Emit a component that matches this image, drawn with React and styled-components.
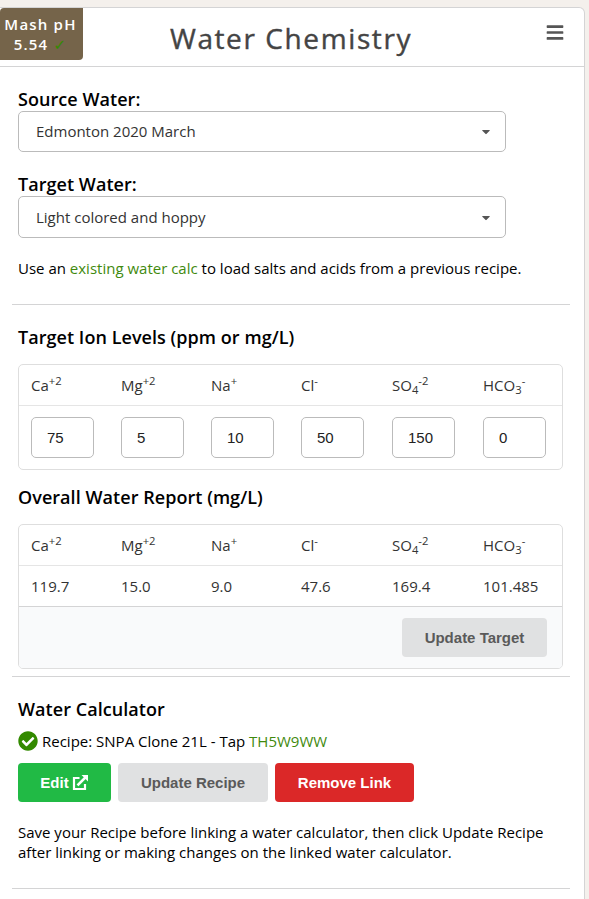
import React, { useState } from "react";
import styled, { createGlobalStyle } from "styled-components";
import { FaBars, FaCaretDown, FaCheckCircle } from "react-icons/fa";

const targetIons = [
  { name: "Ca", sup: "+2", target: "75", overall: "119.7" },
  { name: "Mg", sup: "+2", target: "5", overall: "15.0" },
  { name: "Na", sup: "+", target: "10", overall: "9.0" },
  { name: "Cl", sup: "-", target: "50", overall: "47.6" },
  { name: "SO", sub: "4", sup: "-2", target: "150", overall: "169.4" },
  { name: "HCO", sub: "3", sup: "-", target: "0", overall: "101.485" },
];

const IonHeader = () => (
  <Row $height={40}>
    {targetIons.map((ion) => (
      <Ion key={ion.name}>
        {ion.name}
        {ion.sub && <sub>{ion.sub}</sub>}
        <sup>{ion.sup}</sup>
      </Ion>
    ))}
  </Row>
);

const App = () => {
  // States
  const [levels, setLevels] = useState(targetIons.map((ion) => ion.target));

  // This is to Handle Changes in the target inputs
  const handleChange = (event, index) => {
    setLevels(levels.map((l, i) => (i === index ? event.target.value : l)));
  };

  return (
    <>
      <GlobalStyle />
      <Panel>
        <Header>
          <PhBadge>
            <span>Mash pH</span>
            <span>
              5.54 <Tick>✓</Tick>
            </span>
          </PhBadge>
          <Title>Water Chemistry</Title>
          <MenuIcon />
        </Header>
        <Section $pad="21px 0 26px">
          <Label>Source Water:</Label>
          <Select $height={41} $bottom={1}>
            <span>Edmonton 2020 March</span>
            <FaCaretDown />
          </Select>
          <Label $top={21}>Target Water:</Label>
          <Select $height={42}>
            <span>Light colored and hoppy</span>
            <FaCaretDown />
          </Select>
          <Text $top={20}>
            Use an <Link href="#">existing water calc</Link> to load salts and
            acids from a previous recipe.
          </Text>
        </Section>
        <Divider />
        <Section $pad="21px 0 7px">
          <Label>Target Ion Levels (ppm or mg/L)</Label>
          <Table $top={15}>
            <IonHeader />
            <Row $height={63} $line="#e5e5e5">
              {targetIons.map((ion, i) => (
                <div key={ion.name}>
                  <Input
                    type="text"
                    value={levels[i]}
                    onChange={(e) => handleChange(e, i)}
                  />
                </div>
              ))}
            </Row>
          </Table>
          <Label $top={16}>Overall Water Report (mg/L)</Label>
          <Table $top={15}>
            <IonHeader />
            <Row $height={40} $line="#e5e5e5">
              {targetIons.map((ion) => (
                <Ion key={ion.name}>{ion.overall}</Ion>
              ))}
            </Row>
            <TableFooter>
              <Button $width={145}>Update Target</Button>
            </TableFooter>
          </Table>
        </Section>
        <Divider />
        <Section $pad="21px 0 26px">
          <Label>Water Calculator</Label>
          <Recipe>
            <FaCheckCircle />
            <span>
              Recipe: SNPA Clone 21L - Tap <Link href="#">TH5W9WW</Link>
            </span>
          </Recipe>
          <Buttons>
            <Button $width={93} $bg="#21ba45" $color="white">
              Edit
              <svg width="17" height="17" viewBox="0 0 17 17" fill="none">
                <path
                  d="M7.5 4H2v11h11V10"
                  stroke="currentColor"
                  strokeWidth="2.2"
                />
                <path
                  d="M5.5 11.3L13.5 3.3"
                  stroke="currentColor"
                  strokeWidth="2.6"
                />
                <path d="M9.5 1H16v6.5z" fill="currentColor" />
              </svg>
            </Button>
            <Button $width={150}>Update Recipe</Button>
            <Button $width={139} $bg="#db2828" $color="white">
              Remove Link
            </Button>
          </Buttons>
          <Text $top={20}>
            Save your Recipe before linking a water calculator, then click
            Update Recipe
            <br />
            after linking or making changes on the linked water calculator.
          </Text>
        </Section>
        <Divider />
      </Panel>
    </>
  );
};

const GlobalStyle = createGlobalStyle`
  * {
    box-sizing: border-box;
  }
  body {
    margin: 0;
    overflow: hidden;
    background-color: #f4f0ec;
    font-family: "Open Sans", "Noto Sans", sans-serif;
    font-size: 15px;
    color: #000;
  }
`;

const Panel = styled.div`
  width: 585px;
  height: 900px;
  margin-top: 7px;
  background-color: white;
  border: 1px solid #d4d4d5;
  border-left: none;
  border-radius: 0 6px 0 0;
`;

const Header = styled.div`
  display: grid;
  grid-template-columns: 83px 1fr 85px;
  height: 59px;
  border-bottom: 1px solid #d4d4d5;
`;

const PhBadge = styled.div`
  display: flex;
  flex-direction: column;
  align-items: center;
  height: 52px;
  padding: 6px 2px 0 0;
  background-color: #75644a;
  border-radius: 4px 0 4px 0;
  color: white;
  font-size: 15px;
  font-weight: 600;
  line-height: 20px;
  letter-spacing: 1.2px;
  white-space: nowrap;
`;

const Tick = styled.span`
  color: #338a00;
  font-family: "DejaVu Sans", sans-serif;
  font-size: 15px;
  font-weight: 400;
  line-height: 0;
`;

const Title = styled.h1`
  margin: 0;
  padding-top: 10px;
  color: #444;
  font-size: 28px;
  font-weight: 400;
  line-height: 40px;
  letter-spacing: 1.6px;
  text-align: center;
  -webkit-text-stroke: 0.4px #444;
`;

const MenuIcon = styled(FaBars)`
  margin: 15px 20px 0 auto;
  width: 18px;
  height: 19px;
  color: #555;
`;

const Section = styled.div`
  padding: ${(props) => props.$pad};
  margin: 0 21px 0 18px;
`;

const Label = styled.h3`
  margin: ${(props) => props.$top || 0}px 0 0;
  padding-bottom: 1px;
  font-size: 18px;
  font-weight: 600;
  line-height: 22px;
  letter-spacing: 0.05px;
`;

const Select = styled.div`
  display: flex;
  justify-content: space-between;
  align-items: center;
  width: 488px;
  height: ${(props) => props.$height}px;
  padding: 0 13px ${(props) => props.$bottom || 0}px 17px;
  border: 1px solid #bbb;
  border-radius: 5px;
  color: #333;
  line-height: 20px;
  svg {
    width: 12px;
    height: 13px;
    color: #555;
  }
`;

const Text = styled.p`
  margin: ${(props) => props.$top}px 0 0;
  line-height: 20px;
  white-space: nowrap;
`;

const Link = styled.a`
  color: #3f8a0e;
  text-decoration: none;
`;

const Divider = styled.div`
  height: 1px;
  margin: 0 14px 0 12px;
  background-color: #d4d4d5;
`;

const Table = styled.div`
  width: 545px;
  margin-top: ${(props) => props.$top}px;
  border: 1px solid #dedede;
  border-radius: 5px;
  overflow: hidden;
`;

const Row = styled.div`
  display: grid;
  grid-template-columns: 90px 90px 90px 91px 91px 79px;
  align-items: center;
  box-sizing: content-box;
  height: ${(props) => props.$height}px;
  padding-left: 12px;
  border-top: ${(props) => (props.$line ? `1px solid ${props.$line}` : "none")};
`;

const Ion = styled.div`
  color: #333;
  line-height: 20px;
  sup,
  sub {
    position: relative;
    font-size: 11.25px;
    line-height: 0;
    vertical-align: baseline;
  }
  sup {
    top: -5.6px;
  }
  sub {
    top: 3px;
  }
`;

const Input = styled.input`
  display: block;
  width: 63px;
  height: 41px;
  padding: 0 15px;
  border: 1px solid #bbb;
  border-radius: 5px;
  outline: none;
  color: #222;
  font-family: "Liberation Sans", Arial, sans-serif;
  font-size: 15px;
`;

const TableFooter = styled.div`
  display: flex;
  justify-content: flex-end;
  height: 62px;
  padding: 11px 15px 0 0;
  background-color: #f9fafb;
  border-top: 1px solid #d4d4d5;
`;

const Recipe = styled.div`
  display: flex;
  align-items: center;
  gap: 4px;
  height: 22px;
  margin-top: 9px;
  svg {
    width: 20px;
    height: 20px;
    color: #338a00;
  }
`;

const Buttons = styled.div`
  display: flex;
  gap: 7px;
  margin-top: 11px;
`;

const Button = styled.button`
  display: flex;
  justify-content: center;
  align-items: center;
  gap: 3px;
  width: ${(props) => props.$width}px;
  height: 39px;
  padding: 0;
  border: none;
  border-radius: 4px;
  background-color: ${(props) => props.$bg || "#e0e1e2"};
  color: ${(props) => props.$color || "#5a5a5a"};
  font-family: "Liberation Sans", Arial, sans-serif;
  font-size: 15px;
  font-weight: 700;
`;

export default App;
